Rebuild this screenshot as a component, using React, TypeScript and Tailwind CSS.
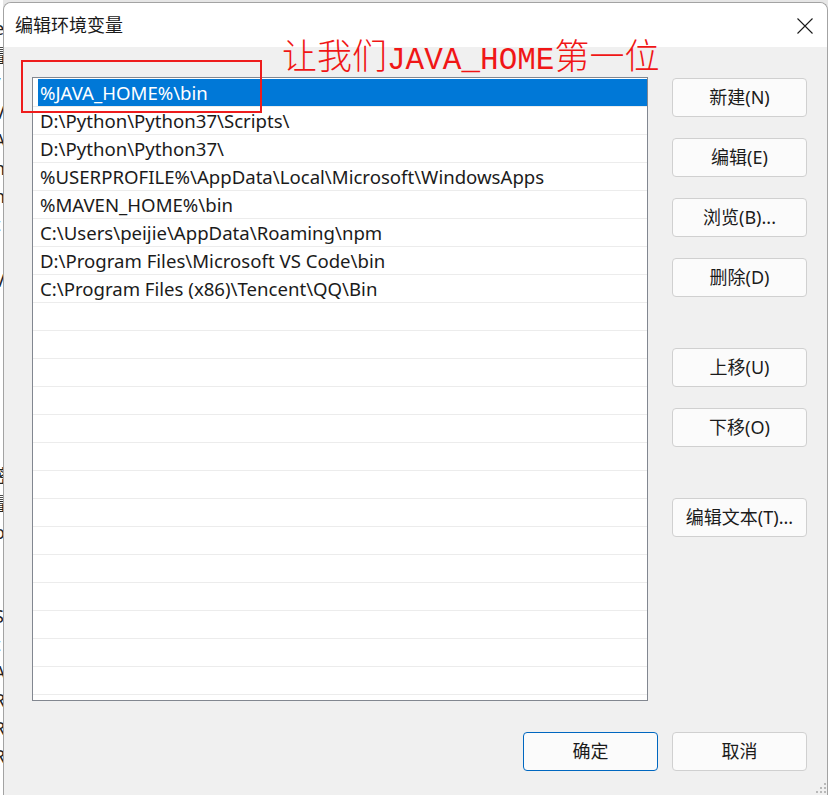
import React from "react";

const paths = [
  "%JAVA_HOME%\\bin",
  "D:\\Python\\Python37\\Scripts\\",
  "D:\\Python\\Python37\\",
  "%USERPROFILE%\\AppData\\Local\\Microsoft\\WindowsApps",
  "%MAVEN_HOME%\\bin",
  "C:\\Users\\peijie\\AppData\\Roaming\\npm",
  "D:\\Program Files\\Microsoft VS Code\\bin",
  "C:\\Program Files (x86)\\Tencent\\QQ\\Bin",
];

const rows = [...paths, ...Array(15).fill("")];

// fragments of the window that sits behind the dialog
const behind = ["e", "量", "/", "V", "A", "n", "n", "t", "l", "V", "", "", "", "", "", "", "密", "量", "o", "i", "", "S", "t", "A", "R", "R", "R"];

const Button = ({ label, primary }: { label: string; primary?: boolean }) => (
  <button
    className={
      "flex h-[39px] w-[135px] items-center justify-center rounded-[4px] border bg-[#fbfbfb] text-[18px] text-[#1b1b1b] " +
      (primary ? "border-[#0067c0]" : "border-[#d0d0d0]")
    }
  >
    {label}
  </button>
);

export default function App() {
  return (
    <div className="relative flex h-[795px] w-[828px] overflow-hidden bg-[#e6e6e6] font-['Noto_Sans','Noto_Sans_CJK_SC',sans-serif]">
      <div aria-hidden className="flex w-[3px] shrink-0 flex-col overflow-hidden bg-white pt-[14px]">
        {behind.map((c, i) => (
          <div key={i} className="flex h-[28px] shrink-0 items-center text-[18px] leading-none text-[#222]">
            <span className="-ml-[6px]">{c}</span>
          </div>
        ))}
      </div>

      <div className="mt-[2px] flex flex-1 flex-col overflow-hidden rounded-t-[8px] border border-b-0 border-[#a3a3a3] bg-[#f0f0f0]">
        <div className="flex h-[44px] shrink-0 items-center justify-between bg-white pl-[11px] pr-[14px]">
          <span className="text-[18px] text-[#1a1a1a]">编辑环境变量</span>
          <svg width="16" height="16" viewBox="0 0 16 16" className="mt-[1px]">
            <path d="M0.5 0.5 L15.5 15.5 M15.5 0.5 L0.5 15.5" stroke="#1a1a1a" strokeWidth="1.1" />
          </svg>
        </div>

        <div className="flex flex-1 flex-col pl-[28px] pr-[20px] pt-[30px]">
          <div className="flex gap-[24px]">
            <div className="h-[624px] w-[616px] overflow-hidden border border-[#828790] bg-white">
              {rows.map((p, i) => (
                <div
                  key={i}
                  className={
                    "h-[28px] whitespace-nowrap text-[18.6px] leading-[27px] " +
                    (i === 0 ? "pl-[5px] pt-[1px]" : "border-t border-[#ececec] pl-[5px]")
                  }
                >
                  {i === 0 ? (
                    <div className="h-[27px] bg-[#0078d7] pl-[2px] text-white">{p}</div>
                  ) : (
                    <div className="pl-[2px] text-[#1b1b1b]">{p}</div>
                  )}
                </div>
              ))}
            </div>

            <div className="flex flex-col pt-[1px]">
              <div className="flex flex-col gap-[21px]">
                <Button label="新建(N)" />
                <Button label="编辑(E)" />
                <Button label="浏览(B)..." />
                <Button label="删除(D)" />
              </div>
              <div className="mt-[51px] flex flex-col gap-[21px]">
                <Button label="上移(U)" />
                <Button label="下移(O)" />
              </div>
              <div className="mt-[51px]">
                <Button label="编辑文本(T)..." />
              </div>
            </div>
          </div>

          <div className="mt-[31px] flex justify-end gap-[14px]">
            <Button label="确定" primary />
            <Button label="取消" />
          </div>
        </div>
      </div>

      <div className="pointer-events-none absolute left-[21px] top-[60px] h-[53px] w-[241px] border-2 border-[#ee1c1c]" />
      <div className="pointer-events-none absolute left-[282px] top-[36px] flex items-baseline text-[35px] leading-none text-[#f01616]">
        <span className="font-['Noto_Sans_CJK_SC',sans-serif] font-light">让我们</span>
        <span className="font-['Liberation_Mono',monospace] text-[31px]">JAVA_HOME</span>
        <span className="font-['Noto_Sans_CJK_SC',sans-serif] font-light">第一位</span>
      </div>

      <svg className="absolute bottom-[1px] right-[1px]" width="12" height="12" viewBox="0 0 12 12">
        <g fill="#b9b9b9">
          <rect x="9" y="1" width="2" height="2" />
          <rect x="5" y="5" width="2" height="2" />
          <rect x="9" y="5" width="2" height="2" />
          <rect x="1" y="9" width="2" height="2" />
          <rect x="5" y="9" width="2" height="2" />
          <rect x="9" y="9" width="2" height="2" />
        </g>
      </svg>
    </div>
  );
}
